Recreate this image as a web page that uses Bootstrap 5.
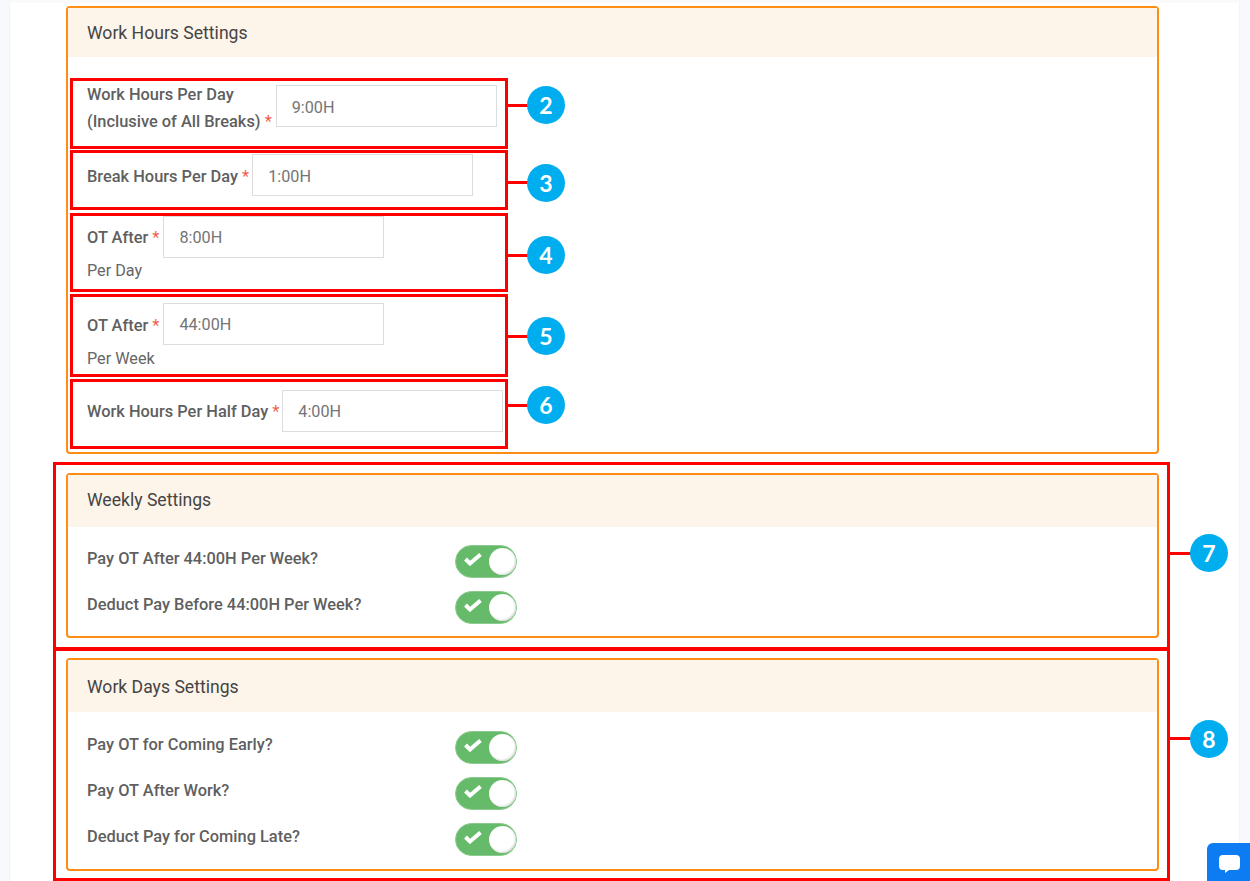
<!DOCTYPE html>
<html lang="en">
<head>
<meta charset="utf-8">
<title>Work Hours Settings</title>
<link href="https://cdn.jsdelivr.net/npm/bootstrap@5.3.0/dist/css/bootstrap.min.css" rel="stylesheet">
<style>
html,body{height:881px;overflow:hidden}
body{background:#f8f9fc;font-family:Roboto,"Liberation Sans",sans-serif;color:#5f5f5f;position:relative}
.panel-main{margin:0 10px 0 9px;height:881px;background:#fff;padding:3px 80px 0 56px;border-top:3px solid #fafafa;border-left:1px solid #f1f3f7;border-right:1px solid #f1f3f7}
.set-card{border:2px solid #ff8c13;border-radius:4px;margin-bottom:20px;background:#fff;--bs-card-inner-border-radius:0}
.set-card .card-header{background:#fdf4ea;border:0;padding:0 19px 2px;height:52px;display:flex;align-items:center;font-size:17.6px;font-weight:400;color:#444;border-radius:0}
.set-card.first{margin-bottom:19px}
.set-card.first .card-header{height:49px;padding:2px 19px 0}
.set-card .card-body{padding:18px 19px 13px}
.set-card.first .card-body{padding:23px 19px 20px}
.set-card.last .card-header{padding:3px 19px 0}
.set-card.last .card-body{padding:19px 19px 14px}
.fld-row{display:flex;align-items:center}
.fld-row.top{align-items:flex-start}
.fld-row.top .fld-input{margin-top:5px}
.fld-lbl{font-size:16.4px;font-weight:500;line-height:27px;color:#5f5f5f;margin:0;padding-right:4px}
.fld-row.top .fld-lbl{padding-top:1px}
.fld-row.nudge .fld-lbl{padding-top:2px}
.fld-row.tight .fld-lbl{padding-right:3px}
.req{color:#f25c4d;font-weight:400}
.fld-input.form-control{width:221px;height:42px;border:1px solid #ddd;border-radius:0;padding:0 15px;font-size:16.2px;color:#757575;font-family:inherit;background:#fff;flex:none}
.fld-row.top .fld-input.form-control,.fld-row.lo .fld-input.form-control{padding-top:2px}
.fld-sub{font-size:16.2px;line-height:27px;color:#666}
.fld-sub.up{margin-top:-1px}
.gap1{margin-bottom:19px}.gap2{margin-bottom:20px}.gap3{margin-bottom:19px}.gap4{margin-bottom:18px}
.sw-row{display:flex;align-items:flex-start;height:32px;margin-bottom:14px}
.sw-row:last-child{margin-bottom:0}
.sw-lbl{width:368px;font-size:16.4px;font-weight:500;line-height:27px;color:#5f5f5f;margin:0;flex:none}
.sw-track{width:62px;height:33px;border-radius:17px;background:#66bb6a;border:1px solid #8bcb8e;position:relative;flex:none}
.sw-knob{position:absolute;right:0;top:2px;width:27px;height:27px;border-radius:50%;background:#fff;box-shadow:inset -1px -1px 2px #d8d8d8}
.sw-check{position:absolute;left:8px;top:6px;width:18px;height:14px}
.note-box{position:absolute;border:3px solid #f00;pointer-events:none}
.note-line{position:absolute;height:3px;background:#f00}
.note-num{position:absolute;width:38px;height:38px;border-radius:50%;background:#00aeef;color:#fff;font-family:Lato,"Liberation Sans",sans-serif;font-weight:700;font-size:23px;display:flex;align-items:center;justify-content:center}
.b1{left:70px;top:78px;width:438px;height:71px}
.b2{left:70px;top:150px;width:438px;height:60px}
.b3{left:70px;top:213px;width:438px;height:79px}
.b4{left:70px;top:294px;width:438px;height:83px}
.b5{left:70px;top:379px;width:438px;height:70px}
.b6{left:53px;top:462px;width:1117px;height:188px}
.b7{left:53px;top:648px;width:1117px;height:233px}
.l1{left:508px;top:104px;width:20px}.n1{left:527px;top:86px}
.l2{left:508px;top:181px;width:20px}.n2{left:527px;top:164px}
.l3{left:508px;top:254px;width:20px}.n3{left:527px;top:236px}
.l4{left:508px;top:335px;width:20px}.n4{left:527px;top:317px}
.l5{left:508px;top:404px;width:20px}.n5{left:527px;top:386px}
.l6{left:1170px;top:552px;width:21px}.n6{left:1190px;top:534px}
.l7{left:1170px;top:737px;width:21px}.n7{left:1190px;top:720px}
.chat-tab{position:absolute;left:1207px;top:843px;width:43px;height:38px;background:#0d7cf2;border-top-left-radius:6px}
.chat-tab svg{position:absolute;left:12px;top:12px;width:21px;height:18px}
</style>
</head>
<body>
<div class="panel-main">
  <div class="card set-card first">
    <div class="card-header">Work Hours Settings</div>
    <div class="card-body">
      <div class="fld-row top gap1">
        <label class="fld-lbl">Work Hours Per Day<br>(Inclusive of All Breaks) <span class="req">*</span></label>
        <input class="form-control fld-input" value="9:00H">
      </div>
      <div class="fld-row nudge lo tight gap2">
        <label class="fld-lbl">Break Hours Per Day <span class="req">*</span></label>
        <input class="form-control fld-input" value="1:00H">
      </div>
      <div class="gap3">
        <div class="fld-row">
          <label class="fld-lbl">OT After <span class="req">*</span></label>
          <input class="form-control fld-input" value="8:00H">
        </div>
        <div class="fld-sub up">Per Day</div>
      </div>
      <div class="gap4">
        <div class="fld-row nudge">
          <label class="fld-lbl">OT After <span class="req">*</span></label>
          <input class="form-control fld-input" value="44:00H">
        </div>
        <div class="fld-sub">Per Week</div>
      </div>
      <div class="fld-row tight">
        <label class="fld-lbl">Work Hours Per Half Day <span class="req">*</span></label>
        <input class="form-control fld-input" value="4:00H">
      </div>
    </div>
  </div>

  <div class="card set-card">
    <div class="card-header">Weekly Settings</div>
    <div class="card-body">
      <div class="sw-row">
        <label class="sw-lbl">Pay OT After 44:00H Per Week?</label>
        <div class="sw-track"><svg class="sw-check" viewBox="0 0 18 14"><path d="M1.5 7L6 11.5L16.5 2.5" fill="none" stroke="#fff" stroke-width="4"/></svg><span class="sw-knob"></span></div>
      </div>
      <div class="sw-row">
        <label class="sw-lbl">Deduct Pay Before 44:00H Per Week?</label>
        <div class="sw-track"><svg class="sw-check" viewBox="0 0 18 14"><path d="M1.5 7L6 11.5L16.5 2.5" fill="none" stroke="#fff" stroke-width="4"/></svg><span class="sw-knob"></span></div>
      </div>
    </div>
  </div>

  <div class="card set-card last">
    <div class="card-header">Work Days Settings</div>
    <div class="card-body">
      <div class="sw-row">
        <label class="sw-lbl">Pay OT for Coming Early?</label>
        <div class="sw-track"><svg class="sw-check" viewBox="0 0 18 14"><path d="M1.5 7L6 11.5L16.5 2.5" fill="none" stroke="#fff" stroke-width="4"/></svg><span class="sw-knob"></span></div>
      </div>
      <div class="sw-row">
        <label class="sw-lbl">Pay OT After Work?</label>
        <div class="sw-track"><svg class="sw-check" viewBox="0 0 18 14"><path d="M1.5 7L6 11.5L16.5 2.5" fill="none" stroke="#fff" stroke-width="4"/></svg><span class="sw-knob"></span></div>
      </div>
      <div class="sw-row">
        <label class="sw-lbl">Deduct Pay for Coming Late?</label>
        <div class="sw-track"><svg class="sw-check" viewBox="0 0 18 14"><path d="M1.5 7L6 11.5L16.5 2.5" fill="none" stroke="#fff" stroke-width="4"/></svg><span class="sw-knob"></span></div>
      </div>
    </div>
  </div>
</div>

<div class="note-box b1"></div><div class="note-line l1"></div><div class="note-num n1">2</div>
<div class="note-box b2"></div><div class="note-line l2"></div><div class="note-num n2">3</div>
<div class="note-box b3"></div><div class="note-line l3"></div><div class="note-num n3">4</div>
<div class="note-box b4"></div><div class="note-line l4"></div><div class="note-num n4">5</div>
<div class="note-box b5"></div><div class="note-line l5"></div><div class="note-num n5">6</div>
<div class="note-box b6"></div><div class="note-line l6"></div><div class="note-num n6">7</div>
<div class="note-box b7"></div><div class="note-line l7"></div><div class="note-num n7">8</div>

<div class="chat-tab"><svg viewBox="0 0 21 18"><path d="M4 0h13a4 4 0 0 1 4 4v7a4 4 0 0 1-4 4H10l-4 3v-3H4a4 4 0 0 1-4-4V4a4 4 0 0 1 4-4z" fill="#fff"/></svg></div>
<script src="https://cdn.jsdelivr.net/npm/bootstrap@5.3.0/dist/js/bootstrap.bundle.min.js"></script>
</body>
</html>
